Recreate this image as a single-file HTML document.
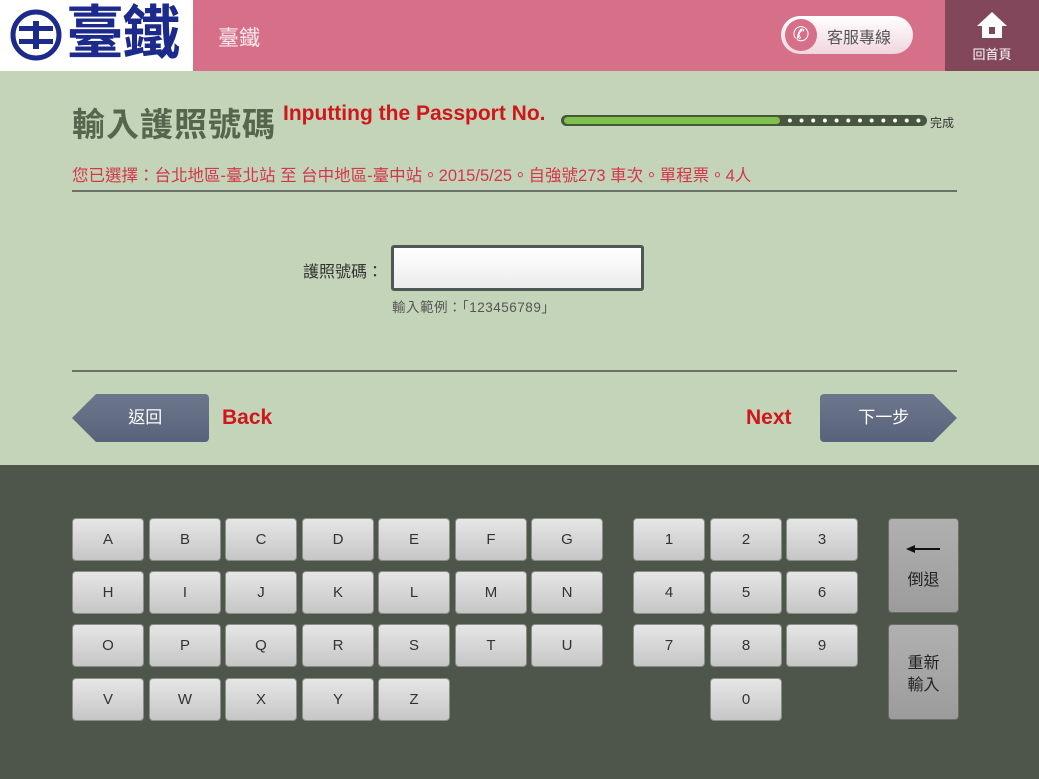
<!DOCTYPE html>
<html><head><meta charset="utf-8"><style>
*{margin:0;padding:0;box-sizing:border-box}
body{width:1039px;height:779px;overflow:hidden;background:#c4d4b8;font-family:"Liberation Sans","Noto Sans CJK TC",sans-serif;position:relative}
.a{position:absolute}
.hdr{left:0;top:0;width:1039px;height:71px;background:#d66f88}
.logo{left:0;top:0;width:193px;height:71px;background:#fff}
.home{left:945px;top:0;width:94px;height:71px;background:#82475a;color:#fff;font-size:13px;text-align:center}
.key{position:absolute;width:72px;height:43px;border-radius:4px;background:linear-gradient(#e6e6e6,#c6c6c6);border:1px solid #8a8f86;font-size:15px;color:#333;text-align:center;line-height:42px}
.big{position:absolute;width:71px;border-radius:4px;background:linear-gradient(#b0b0b0,#9c9c9c);border:1px solid #6a6f66;font-size:16px;color:#222;text-align:center}
.btn{position:absolute;height:48px;background:linear-gradient(#6d778c,#58627a);color:#fff;font-size:17px;text-align:center;line-height:48px}
</style></head><body>
<div class="a hdr"></div>
<div class="a logo">
<svg class="a" style="left:10px;top:9px" width="52" height="52" viewBox="0 0 52 52"><circle cx="26" cy="26" r="23" fill="none" stroke="#1c2a8c" stroke-width="5"/><rect x="9" y="17" width="34" height="5" fill="#1c2a8c"/><rect x="9" y="30" width="34" height="5" fill="#1c2a8c"/><rect x="23" y="12" width="6" height="28" fill="#1c2a8c"/></svg>
<div class="a" style="left:66px;top:0px;font-size:58px;font-weight:bold;color:#1c2a8c;line-height:68px;letter-spacing:-2px">臺鐵</div>
</div>
<div class="a" style="left:218px;top:22px;font-size:21px;color:#fbe8ee">臺鐵</div>
<div class="a" style="left:781px;top:16px;width:132px;height:38px;border-radius:19px;background:linear-gradient(#fff,#f0d6de)"></div>
<div class="a" style="left:785px;top:19px;width:32px;height:32px;border-radius:16px;background:#d66f88;color:#fff;font-size:20px;text-align:center;line-height:32px">✆</div>
<div class="a" style="left:827px;top:24px;font-size:16px;color:#555">客服專線</div>
<div class="a home"><svg style="margin-top:11px" width="32" height="28" viewBox="0 0 32 28"><path d="M16 1L1 15h5v12h20V15h5z" fill="#fff"/><rect x="13" y="16" width="6" height="7" fill="#82475a"/></svg><div style="margin-top:2px">回首頁</div></div>
<div class="a" style="left:72px;top:98px;font-size:33px;font-weight:bold;color:#56654d;letter-spacing:1px">輸入護照號碼</div>
<div class="a" style="left:283px;top:102px;font-size:21px;font-weight:bold;color:#d0161b">Inputting the Passport No.</div>
<div class="a" style="left:561px;top:115px;width:366px;height:11px;border-radius:6px;background:#48563f"></div>
<div class="a" style="left:564px;top:117px;width:216px;height:7px;border-radius:4px;background:#7fc04a"></div>
<div class="a" style="left:784px;top:118px;width:140px;height:5px;background:radial-gradient(circle,#fff 1.8px,transparent 2.2px) 0 0/11.7px 5px repeat-x"></div>
<div class="a" style="left:930px;top:114px;font-size:12px;color:#333">完成</div>
<div class="a" style="left:72px;top:162px;font-size:16.5px;color:#d2374d;white-space:nowrap">您已選擇：台北地區-臺北站 至 台中地區-臺中站。2015/5/25。自強號273 車次。單程票。4人</div>
<div class="a" style="left:72px;top:190px;width:885px;height:2px;background:#6b7167"></div>
<div class="a" style="left:303px;top:258px;font-size:16px;color:#333">護照號碼：</div>
<div class="a" style="left:391px;top:245px;width:253px;height:46px;border:3px solid #4f5656;border-radius:3px;background:linear-gradient(#fff,#ececec)"></div>
<div class="a" style="left:392px;top:296px;font-size:13.5px;color:#555;letter-spacing:0.5px">輸入範例：「123456789」</div>
<div class="a" style="left:72px;top:370px;width:885px;height:2px;background:#6b7167"></div>
<div class="btn" style="left:72px;top:394px;width:137px;clip-path:polygon(24px 0,100% 0,100% 100%,24px 100%,0 50%);border-radius:0 4px 4px 0">&nbsp;&nbsp;返回</div>
<div class="a" style="left:222px;top:406px;font-size:21px;font-weight:bold;color:#d0161b">Back</div>
<div class="a" style="left:746px;top:406px;font-size:21px;font-weight:bold;color:#d0161b">Next</div>
<div class="btn" style="left:820px;top:394px;width:137px;clip-path:polygon(0 0,calc(100% - 24px) 0,100% 50%,calc(100% - 24px) 100%,0 100%);border-radius:4px 0 0 4px">下一步&nbsp;&nbsp;</div>
<div class="a" style="left:0;top:465px;width:1039px;height:314px;background:#4e554a">
<div class="key" style="left:72px;top:53px">A</div><div class="key" style="left:149px;top:53px">B</div><div class="key" style="left:225px;top:53px">C</div><div class="key" style="left:302px;top:53px">D</div><div class="key" style="left:378px;top:53px">E</div><div class="key" style="left:455px;top:53px">F</div><div class="key" style="left:531px;top:53px">G</div>
<div class="key" style="left:72px;top:106px">H</div><div class="key" style="left:149px;top:106px">I</div><div class="key" style="left:225px;top:106px">J</div><div class="key" style="left:302px;top:106px">K</div><div class="key" style="left:378px;top:106px">L</div><div class="key" style="left:455px;top:106px">M</div><div class="key" style="left:531px;top:106px">N</div>
<div class="key" style="left:72px;top:159px">O</div><div class="key" style="left:149px;top:159px">P</div><div class="key" style="left:225px;top:159px">Q</div><div class="key" style="left:302px;top:159px">R</div><div class="key" style="left:378px;top:159px">S</div><div class="key" style="left:455px;top:159px">T</div><div class="key" style="left:531px;top:159px">U</div>
<div class="key" style="left:72px;top:213px">V</div><div class="key" style="left:149px;top:213px">W</div><div class="key" style="left:225px;top:213px">X</div><div class="key" style="left:302px;top:213px">Y</div><div class="key" style="left:378px;top:213px">Z</div>
<div class="key" style="left:633px;top:53px">1</div><div class="key" style="left:710px;top:53px">2</div><div class="key" style="left:786px;top:53px">3</div>
<div class="key" style="left:633px;top:106px">4</div><div class="key" style="left:710px;top:106px">5</div><div class="key" style="left:786px;top:106px">6</div>
<div class="key" style="left:633px;top:159px">7</div><div class="key" style="left:710px;top:159px">8</div><div class="key" style="left:786px;top:159px">9</div>
<div class="key" style="left:710px;top:213px">0</div>
<div class="big" style="left:888px;top:53px;height:95px"><svg style="margin-top:26px" width="36" height="8" viewBox="0 0 36 8"><path d="M2 4H34" stroke="#111" stroke-width="2"/><path d="M0 4L9 0V8z" fill="#111"/></svg><div style="margin-top:8px">倒退</div></div>
<div class="big" style="left:888px;top:159px;height:96px;padding-top:28px;line-height:22px">重新<br>輸入</div>
</div>
</body></html>
